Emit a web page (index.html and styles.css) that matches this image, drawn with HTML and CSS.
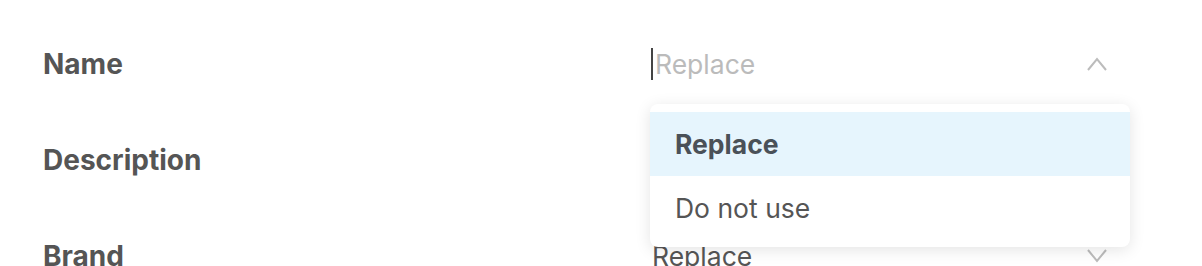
FILE: index.html
```html
<!DOCTYPE html>
<html>
<head>
<meta charset="utf-8">
<link rel="stylesheet" href="styles.css">
</head>
<body>
<div class="form">
  <div class="row">
    <div class="label">Name</div>
    <div class="field open">
      <div class="control">
        <span class="caret"></span>
        <span class="placeholder">Replace</span>
        <svg class="chev" width="20" height="14" viewBox="0 0 20 14"><path d="M1 13 L10 2 L19 13" fill="none" stroke="#bcbcbc" stroke-width="2"/></svg>
      </div>
      <div class="menu">
        <div class="opt active">Replace</div>
        <div class="opt">Do not use</div>
      </div>
    </div>
  </div>
  <div class="row">
    <div class="label">Description</div>
    <div class="field"></div>
  </div>
  <div class="row">
    <div class="label">Brand</div>
    <div class="field">
      <div class="control">
        <span class="value">Replace</span>
        <svg class="chev" width="20" height="14" viewBox="0 0 20 14"><path d="M1 1 L10 12 L19 1" fill="none" stroke="#bcbcbc" stroke-width="2"/></svg>
      </div>
    </div>
  </div>
</div>
</body>
</html>
```
FILE: styles.css
```css
html, body {
  margin: 0;
  padding: 0;
  background: #fff;
  overflow: hidden;
}
body {
  font-family: Inter, "Noto Sans", sans-serif;
  color: #555;
}
.form {
  padding: 16px 72px 0 43px;
}
.row {
  display: grid;
  grid-template-columns: 608px 479px;
  height: 96px;
  align-items: center;
}
.label {
  font-size: 28px;
  font-weight: 700;
  color: #555;
}
.field {
  position: relative;
  height: 48px;
}
.control {
  display: flex;
  align-items: center;
  height: 48px;
  padding-right: 23px;
}
.caret {
  width: 2px;
  height: 32px;
  background: #444;
  margin-right: 2px;
}
.placeholder {
  font-size: 26.5px;
  color: #bbb;
  flex: 1;
}
.value {
  font-size: 26.5px;
  color: #555;
  flex: 1;
  padding-left: 1px;
}
.chev {
  display: block;
}
.menu {
  position: absolute;
  left: -1px;
  right: 0;
  top: 64px;
  background: #fff;
  border-radius: 8px;
  padding: 8px 0 7px;
  box-shadow: 0 3px 16px rgba(0,0,0,0.11);
  z-index: 2;
}
.opt {
  height: 64px;
  display: flex;
  align-items: center;
  padding-left: 25px;
  font-size: 26.5px;
  color: #555;
}
.opt.active {
  background: #e6f5fd;
  font-weight: 700;
  color: #4a5158;
}
```
